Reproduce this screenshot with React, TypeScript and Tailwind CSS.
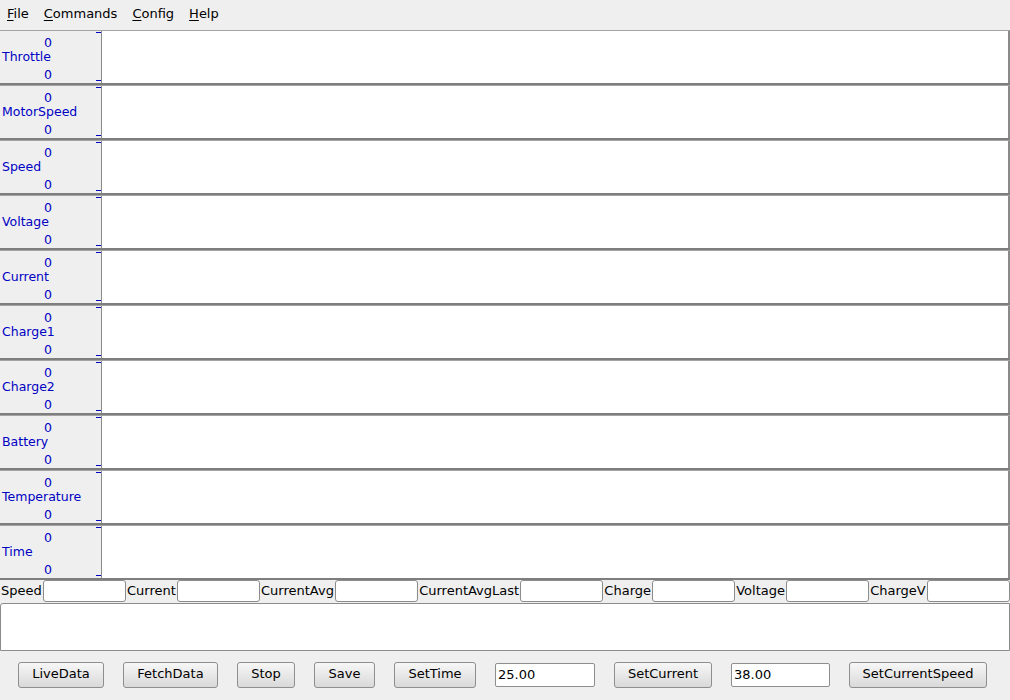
import React from 'react'

const channels = [
  'Throttle',
  'MotorSpeed',
  'Speed',
  'Voltage',
  'Current',
  'Charge1',
  'Charge2',
  'Battery',
  'Temperature',
  'Time',
]

const fields = [
  'Speed',
  'Current',
  'CurrentAvg',
  'CurrentAvgLast',
  'Charge',
  'Voltage',
  'ChargeV',
]

function Menu() {
  const items = [
    ['F', 'ile'],
    ['C', 'ommands'],
    ['C', 'onfig'],
    ['H', 'elp'],
  ]
  return (
    <div className="flex h-[30px] items-center gap-[15px] pb-[2px] pl-[7px] text-[13px] text-black">
      {items.map(([key, rest], i) => (
        <span key={i}>
          <span className="underline underline-offset-2">{key}</span>
          {rest}
        </span>
      ))}
    </div>
  )
}

function ChannelRow({ name }: { name: string }) {
  return (
    <div className="flex h-[55px] border-t border-b-2 border-t-[#a4a4a4] border-b-[#7e7e7e]">
      <div className="flex w-[101px] bg-[#efefef]">
        <div className="flex flex-1 flex-col pt-[5px] text-[12.5px] leading-[14px] text-[#0000c4]">
          <div className="w-[52px] text-right">0</div>
          <div className="pl-[2px] whitespace-nowrap">{name}</div>
          <div className="mt-[4px] w-[52px] text-right">0</div>
        </div>
        <div className="flex w-[5px] flex-col justify-between pt-[1px] pb-[2px]">
          <div className="h-px bg-[#0000c4]" />
          <div className="h-px bg-[#0000c4]" />
        </div>
      </div>
      <div className="flex-1 border-l border-r-2 border-l-[#8a8a8a] border-r-[#8a8a8a] bg-white" />
    </div>
  )
}

function Button({ label, w }: { label: string; w: string }) {
  return (
    <button
      className={`${w} h-[26px] rounded-[3px] border border-[#8e8e8e] bg-gradient-to-b from-[#f7f7f7] to-[#d9d9d9] pb-[2px] text-[13px] text-black`}
    >
      {label}
    </button>
  )
}

function NumberBox({ value, w }: { value: string; w: string }) {
  return (
    <div
      className={`${w} flex h-[24px] items-center rounded-[2px] border border-[#8e8e8e] bg-white pl-[2px] text-[13px] text-black`}
    >
      {value}
    </div>
  )
}

export default function App() {
  return (
    <div className="h-[700px] w-[1010px] overflow-hidden bg-[#efefef] font-['DejaVu_Sans',sans-serif]">
      <Menu />
      {channels.map((c) => (
        <ChannelRow key={c} name={c} />
      ))}
      <div className="flex h-[23px] items-center pb-px text-[13px] text-black">
        {fields.map((f) => (
          <React.Fragment key={f}>
            <span className="px-px">{f}</span>
            <div className="h-[22px] flex-1 rounded-[3px] border border-[#8c8c8c] bg-white" />
          </React.Fragment>
        ))}
      </div>
      <div className="h-[48px] rounded-tl-[3px] border border-[#8c8c8c] bg-white" />
      <div className="flex items-center gap-[19px] pt-[11px] pl-[18px]">
        <Button label="LiveData" w="w-[86px]" />
        <Button label="FetchData" w="w-[95px]" />
        <Button label="Stop" w="w-[58px]" />
        <Button label="Save" w="w-[61px]" />
        <Button label="SetTime" w="w-[82px]" />
        <NumberBox value="25.00" w="w-[100px]" />
        <Button label="SetCurrent" w="w-[98px]" />
        <NumberBox value="38.00" w="w-[99px]" />
        <Button label="SetCurrentSpeed" w="w-[138px]" />
      </div>
    </div>
  )
}
